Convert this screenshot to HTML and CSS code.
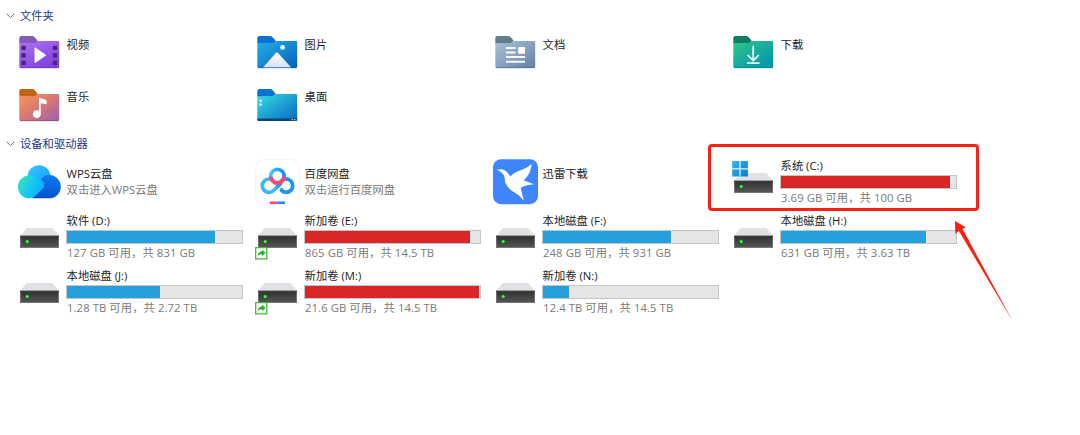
FILE: index.html
```
<!DOCTYPE html>
<html lang="zh-CN">

<head>
    <meta charset="UTF-8">
    <meta name="viewport" content="width=device-width, initial-scale=1.0">
    <title>此电脑</title>
    <link rel="stylesheet" href="styles.css">
</head>

<body>
    <!-- shared gradients and shapes -->
    <svg class="defs" width="0" height="0" aria-hidden="true">
        <defs>
            <linearGradient id="g-video" x1="0" y1="0" x2="0.6" y2="1"><stop offset="0" stop-color="#b070f5"/><stop offset="1" stop-color="#8142e0"/></linearGradient>
            <linearGradient id="g-picture" x1="0" y1="0" x2="1" y2="1"><stop offset="0" stop-color="#27aeea"/><stop offset="1" stop-color="#0562b8"/></linearGradient>
            <linearGradient id="g-doc" x1="0" y1="0" x2="1" y2="1"><stop offset="0" stop-color="#adc2da"/><stop offset="1" stop-color="#6381a5"/></linearGradient>
            <linearGradient id="g-down" x1="0" y1="0" x2="0.9" y2="1"><stop offset="0" stop-color="#32c58b"/><stop offset="1" stop-color="#0095ab"/></linearGradient>
            <linearGradient id="g-music" x1="0" y1="0" x2="1" y2="1"><stop offset="0" stop-color="#fb9456"/><stop offset="0.55" stop-color="#d47478"/><stop offset="1" stop-color="#9560b4"/></linearGradient>
            <linearGradient id="g-desk" x1="0" y1="0" x2="1" y2="1"><stop offset="0" stop-color="#37dce4"/><stop offset="1" stop-color="#0667c0"/></linearGradient>
            <linearGradient id="g-hill" x1="0" y1="0" x2="0" y2="1"><stop offset="0" stop-color="#fff"/><stop offset="1" stop-color="#d5e0fa"/></linearGradient>
            <linearGradient id="g-disk" x1="0" y1="0" x2="0" y2="1"><stop offset="0" stop-color="#303030"/><stop offset="1" stop-color="#575757"/></linearGradient>
            <linearGradient id="g-win" x1="0" y1="0" x2="1" y2="1"><stop offset="0" stop-color="#37b7ee"/><stop offset="1" stop-color="#0879d2"/></linearGradient>
            <linearGradient id="g-cloud1" x1="0" y1="0" x2="0.8" y2="1"><stop offset="0" stop-color="#36c9ff"/><stop offset="1" stop-color="#1299fc"/></linearGradient>
            <linearGradient id="g-cloud2" x1="0" y1="0.1" x2="1" y2="0.6"><stop offset="0" stop-color="#45e2b0"/><stop offset="0.5" stop-color="#18ccec"/><stop offset="1" stop-color="#05aefc"/></linearGradient>
            <linearGradient id="g-cloud3" x1="0.6" y1="0" x2="0.4" y2="1"><stop offset="0" stop-color="#0a7cf0"/><stop offset="1" stop-color="#0650d0"/></linearGradient>
            <linearGradient id="g-pan" x1="0" y1="0" x2="1" y2="0"><stop offset="0" stop-color="#3fcbfc"/><stop offset="1" stop-color="#1490f8"/></linearGradient>

            <path id="tab" d="M3.3 10a2 2 0 0 1 2-2h10.4c1.2 0 2 .3 2.7 1.1l3 3.2v3.5H3.3z"/>
            <path id="folder" d="M3.3 15.3h14c1.4 0 2-.5 2.7-1.4l.9-1H42a1.2 1.2 0 0 1 1.2 1.2v24.500a1.500 1.500 0 0 1-1.500 1.500H4.800a1.500 1.500 0 0 1-1.500-1.500z"/>
            <g id="disk">
                <path d="M10.8 15h25.5l6.7 8H4z" fill="#dfe1e5"/>
                <path d="M4 22.8h39V35H4z" fill="url(#g-disk)"/>
                <path d="M4.5 23h38v11.5h-38z" fill="none" stroke="#8d8d8d" stroke-opacity=".6"/>
                <path d="M4 23.4h39" stroke="#3b3b3b"/>
                <circle cx="11.2" cy="28.6" r="2.1" fill="#126b18"/>
                <circle cx="11.2" cy="28.6" r="1.5" fill="#45f34d"/>
            </g>
            <g id="link">
                <path d="M1.7 34.7h11.1v11.1H1.7z" fill="#fff" stroke="#45b53d" stroke-width="1.3"/>
                <path d="M3.6 43.6c.1-3.2 1.5-5.1 4.2-5.2v-1.9l3.9 3.4-3.9 3.4v-2c-1.8 0-3.1.7-4.2 2.3z" fill="#36ab32"/>
            </g>
        </defs>
    </svg>

    <main class="explorer">
        <h2 class="group-title">
            <svg class="chevron" viewBox="0 0 9 6"><path d="M.7.7 4.5 4.6 8.3.7"/></svg>文件夹
        </h2>
        <div class="grid folders">
            <div class="item">
                <svg class="icon" viewBox="0 0 48 48">
                    <use href="#tab" fill="#825abb"/><use href="#folder" fill="url(#g-video)"/>
                    <path d="M4 39.7h38.6" stroke="#6b35c4" stroke-opacity=".7"/>
                    <path d="M5.4 17.8h4.3v4.3H5.4zM5.4 25.3h4.3v4.3H5.4zM5.4 32.8h4.3v4.3H5.4zM36.8 17.8h4.3v4.3h-4.3zM36.8 25.3h4.3v4.3h-4.3zM36.8 32.8h4.3v4.3h-4.3z" fill="#46296f"/>
                    <path d="M19 19.8v14.8l10.7-7.4z" fill="#fff" stroke="#fff" stroke-linejoin="round"/>
                </svg>
                <div class="info"><span class="name">视频</span></div>
            </div>
            <div class="item">
                <svg class="icon" viewBox="0 0 48 48">
                    <use href="#tab" fill="#0873ce"/><use href="#folder" fill="url(#g-picture)"/>
                    <path d="M9 39.6 21.6 25.3c1-1 1.6-1 2.6 0L37.2 39.6z" fill="url(#g-hill)"/>
                    <circle cx="28.6" cy="19.4" r="2.4" fill="#e9f7ff"/>
                    <path d="M4 39.8h38.6" stroke="#174f91" stroke-opacity=".5"/>
                </svg>
                <div class="info"><span class="name">图片</span></div>
            </div>
            <div class="item">
                <svg class="icon" viewBox="0 0 48 48">
                    <use href="#tab" fill="#5f7e8c"/><use href="#folder" fill="url(#g-doc)"/>
                    <path d="M4 39.7h38.6" stroke="#4d698b" stroke-opacity=".7"/>
                    <path d="M14 20h9.6M14 24.5h9.6M14 29h19M14 33.7h19" stroke="#f4f8fd" stroke-width="1.9"/>
                    <rect x="26.2" y="19" width="6.8" height="6.7" rx=".8" fill="#fff"/>
                </svg>
                <div class="info"><span class="name">文档</span></div>
            </div>
            <div class="item">
                <svg class="icon" viewBox="0 0 48 48">
                    <use href="#tab" fill="#0b8160"/><use href="#folder" fill="url(#g-down)"/>
                    <path d="M4 39.7h38.6" stroke="#087a84" stroke-opacity=".6"/>
                    <path d="M23.2 17.8v14.7M17.6 27l5.6 5.7 5.6-5.7M17 35.1h12.6" fill="none" stroke="#eafffb" stroke-width="1.7"/>
                </svg>
                <div class="info"><span class="name">下载</span></div>
            </div>
            <div class="item">
                <svg class="icon" viewBox="0 0 48 48">
                    <use href="#tab" fill="#bd6415"/><use href="#folder" fill="url(#g-music)"/>
                    <path d="M4 39.7h38.6" stroke="#82506c" stroke-opacity=".7"/>
                    <path d="M23 16.4c2.5 1 5.3 1.4 7.6 3v4.2c-2-.9-4-1-5.800-1.600v10.800a4 4 0 1 1-1.800-3z" fill="#fff"/>
                </svg>
                <div class="info"><span class="name">音乐</span></div>
            </div>
            <div class="item">
                <svg class="icon" viewBox="0 0 48 48">
                    <use href="#tab" fill="#0873ce"/><use href="#folder" fill="url(#g-desk)"/>
                    <path d="M3.3 37.4h39.9v1.2a1.5 1.5 0 0 1-1.5 1.5H4.8a1.5 1.5 0 0 1-1.5-1.5z" fill="#0a4674"/>
                    <circle cx="6.6" cy="19.8" r="1.3" fill="#e9ffff"/><circle cx="6.6" cy="23.6" r="1.3" fill="#e9ffff"/>
                    <path d="M37.5 38.7h1.6M40 38.7h1.4" stroke="#c8e4f6"/>
                </svg>
                <div class="info"><span class="name">桌面</span></div>
            </div>
        </div>

        <h2 class="group-title devices-title">
            <svg class="chevron" viewBox="0 0 9 6"><path d="M.7.7 4.5 4.6 8.3.7"/></svg>设备和驱动器
        </h2>
        <div class="grid devices">
            <div class="item app">
                <svg class="icon" viewBox="0 0 48 48">
                    <circle cx="23" cy="18.6" r="11.4" fill="url(#g-cloud1)"/>
                    <path d="M33.2 17.1c-4.2 0-6.3 2.100-8.300 4.200l4.200 4.200L16 40.300h17.200a11.600 11.600 0 0 0 0-23.200z" fill="url(#g-cloud3)"/>
                    <path d="M13.3 17.4c3.4 0 6 1.3 8.100 3.400l7.400 7.400-8.500 8.800c-2.200 2.200-4.200 3.300-7 3.300a11.450 11.450 0 0 1 0-22.900z" fill="url(#g-cloud2)"/>
                </svg>
                <div class="info"><span class="name">WPS云盘</span><span class="note">双击进入WPS云盘</span></div>
            </div>
            <div class="item app">
                <svg class="icon" viewBox="0 0 48 48">
                    <rect x="1.5" y="1.5" width="44" height="44.5" rx="9" fill="#fff" stroke="#f3f3f3"/>
                    <g fill="none" stroke-width="3.7">
                        <path d="M19.700 22.900A6.700 6.700 0 1 0 19.700 32.500L27.300 25" stroke="#38b9fb"/>
                        <path d="M23 28.800l4.300-4.300M27.300 22.900A6.700 6.700 0 1 1 27.300 32.400" stroke="#1795fa"/>
                        <circle cx="27.600" cy="31.800" r="1.900" fill="#1795fa" stroke="none"/>
                        <circle cx="23.400" cy="18" r="6.700" stroke="url(#g-pan)"/>
                        <path d="M16.700 18.400a6.700 6.700 0 0 0 13.400 0" stroke="#f94c72"/>
                    </g>
                    <path d="M15.8 43.400h7.600v2.700h-7.600z" fill="#fb4c70"/>
                    <path d="M23.4 43.400H31v2.700h-7.600z" fill="#238ffa"/>
                </svg>
                <div class="info"><span class="name">百度网盘</span><span class="note">双击运行百度网盘</span></div>
            </div>
            <div class="item app">
                <svg class="icon" viewBox="0 0 48 48">
                    <rect x="1" y="1.2" width="45" height="45" rx="8" fill="#3f85fd"/>
                    <path d="M4.200 11.600c2.800.4 4-.4 6-.2 3.300.4 5.100 2.500 8.200 7.200 5.600-6.600 14.800-6.200 21.100-12.500-.2 6.200-2.700 12-7.800 16.100l10.100 4.100c-4.600.4-9.200 1.200-13.100 3.400l3.100 13.100c-2.900-3.700-5.500-6-8.800-8C16.700 31 12.700 26.500 12.700 20.800c0-3.600-2.400-6.800-8.500-9.200z" fill="#fff"/>
                </svg>
                <div class="info"><span class="name">迅雷下载</span></div>
            </div>
            <div class="item drive marked">
                <svg class="icon" viewBox="0 0 48 48">
                    <use href="#disk"/>
                    <path d="M2.2 3h7.3v7.3H2.2zM10.4 3h7.5v7.3h-7.5zM2.2 11.2h7.3v7.4H2.2zM10.4 11.2h7.5v7.4h-7.5z" fill="url(#g-win)"/>
                    <path d="M2.2 10.75h15.7M9.95 3v15.6" stroke="#b9e4f8" stroke-width=".9"/>
                </svg>
                <div class="info"><span class="name">系统 (C:)</span><div class="bar"><div class="fill full" style="width: 96.3%"></div></div><span class="note">3.69 GB 可用，共 100 GB</span></div>
                <svg class="arrow" viewBox="0 0 60 104"><path d="M2 1l10.7 6.3-3.1 1.8L60 101.7 5.900 11.100 2.300 13.700z"/></svg>
            </div>
            <div class="item drive">
                <svg class="icon" viewBox="0 0 48 48"><use href="#disk"/></svg>
                <div class="info"><span class="name">软件 (D:)</span><div class="bar"><div class="fill" style="width: 84.7%"></div></div><span class="note">127 GB 可用，共 831 GB</span></div>
            </div>
            <div class="item drive">
                <svg class="icon" viewBox="0 0 48 48"><use href="#disk"/><use href="#link"/></svg>
                <div class="info"><span class="name">新加卷 (E:)</span><div class="bar"><div class="fill full" style="width: 94.2%"></div></div><span class="note">865 GB 可用，共 14.5 TB</span></div>
            </div>
            <div class="item drive">
                <svg class="icon" viewBox="0 0 48 48"><use href="#disk"/></svg>
                <div class="info"><span class="name">本地磁盘 (F:)</span><div class="bar"><div class="fill" style="width: 73.4%"></div></div><span class="note">248 GB 可用，共 931 GB</span></div>
            </div>
            <div class="item drive">
                <svg class="icon" viewBox="0 0 48 48"><use href="#disk"/></svg>
                <div class="info"><span class="name">本地磁盘 (H:)</span><div class="bar"><div class="fill" style="width: 83%"></div></div><span class="note">631 GB 可用，共 3.63 TB</span></div>
            </div>
            <div class="item drive">
                <svg class="icon" viewBox="0 0 48 48"><use href="#disk"/></svg>
                <div class="info"><span class="name">本地磁盘 (J:)</span><div class="bar"><div class="fill" style="width: 52.9%"></div></div><span class="note">1.28 TB 可用，共 2.72 TB</span></div>
            </div>
            <div class="item drive">
                <svg class="icon" viewBox="0 0 48 48"><use href="#disk"/><use href="#link"/></svg>
                <div class="info"><span class="name">新加卷 (M:)</span><div class="bar"><div class="fill full" style="width: 99.4%"></div></div><span class="note">21.6 GB 可用，共 14.5 TB</span></div>
            </div>
            <div class="item drive">
                <svg class="icon" viewBox="0 0 48 48"><use href="#disk"/></svg>
                <div class="info"><span class="name">新加卷 (N:)</span><div class="bar"><div class="fill" style="width: 14.9%"></div></div><span class="note">12.4 TB 可用，共 14.5 TB</span></div>
            </div>
        </div>
    </main>
</body>

</html>
```

FILE: styles.css
```
*,
*::before {
    box-sizing: border-box;
}

body {
    margin: 0;
    background: #fff;
    font-family: "Open Sans", "Noto Sans CJK SC", sans-serif;
    font-size: 11.3px;
    line-height: 16px;
    color: #1c1c1c;
}

.defs {
    display: block;
}

.explorer {
    padding-top: 4px;
}

.group-title {
    display: flex;
    align-items: center;
    gap: 5px;
    height: 24px;
    margin: 0;
    padding-left: 6px;
    font-size: 11.3px;
    font-weight: 400;
    color: #26368c;
}

.devices-title {
    height: 22px;
}

.chevron {
    width: 9px;
    height: 6px;
    fill: none;
    stroke: #777;
}

.grid {
    display: grid;
    grid-template-columns: repeat(4, 238px);
    padding-left: 16px;
}

.folders {
    grid-auto-rows: 52.5px;
}

.devices {
    grid-auto-rows: 55px;
}

.item {
    position: relative;
    display: flex;
    gap: 2px;
}

.icon {
    flex: none;
    width: 48px;
    height: 48px;
}

.devices .icon {
    margin-top: 3px;
}

.info {
    display: flex;
    flex-direction: column;
    width: 177px;
    padding-top: 8.5px;
    white-space: nowrap;
}

.app .info {
    padding-top: 11px;
}

.drive .info {
    padding-top: 3px;
}

.name,
.note {
    padding-left: 0.6px;
}

.note {
    color: #7b7b7b;
}

.drive .note {
    padding-left: 1px;
    letter-spacing: 0.08px;
}

.bar {
    height: 14px;
    margin: 1px 0;
    border: 1px solid #c4c4c4;
    background: #e6e6e6;
}

.fill {
    height: 100%;
    background: #26a0da;
}

.fill.full {
    background: #da2626;
}

/* highlight around the system drive */
.marked::before {
    content: "";
    position: absolute;
    top: -11px;
    left: -22px;
    width: 271px;
    height: 67px;
    border: 3px solid #fd1f14;
    border-radius: 4px;
}

.arrow {
    position: absolute;
    top: 65px;
    left: 223px;
    width: 60px;
    height: 104px;
    fill: #fd1f14;
    z-index: 1;
}
```
